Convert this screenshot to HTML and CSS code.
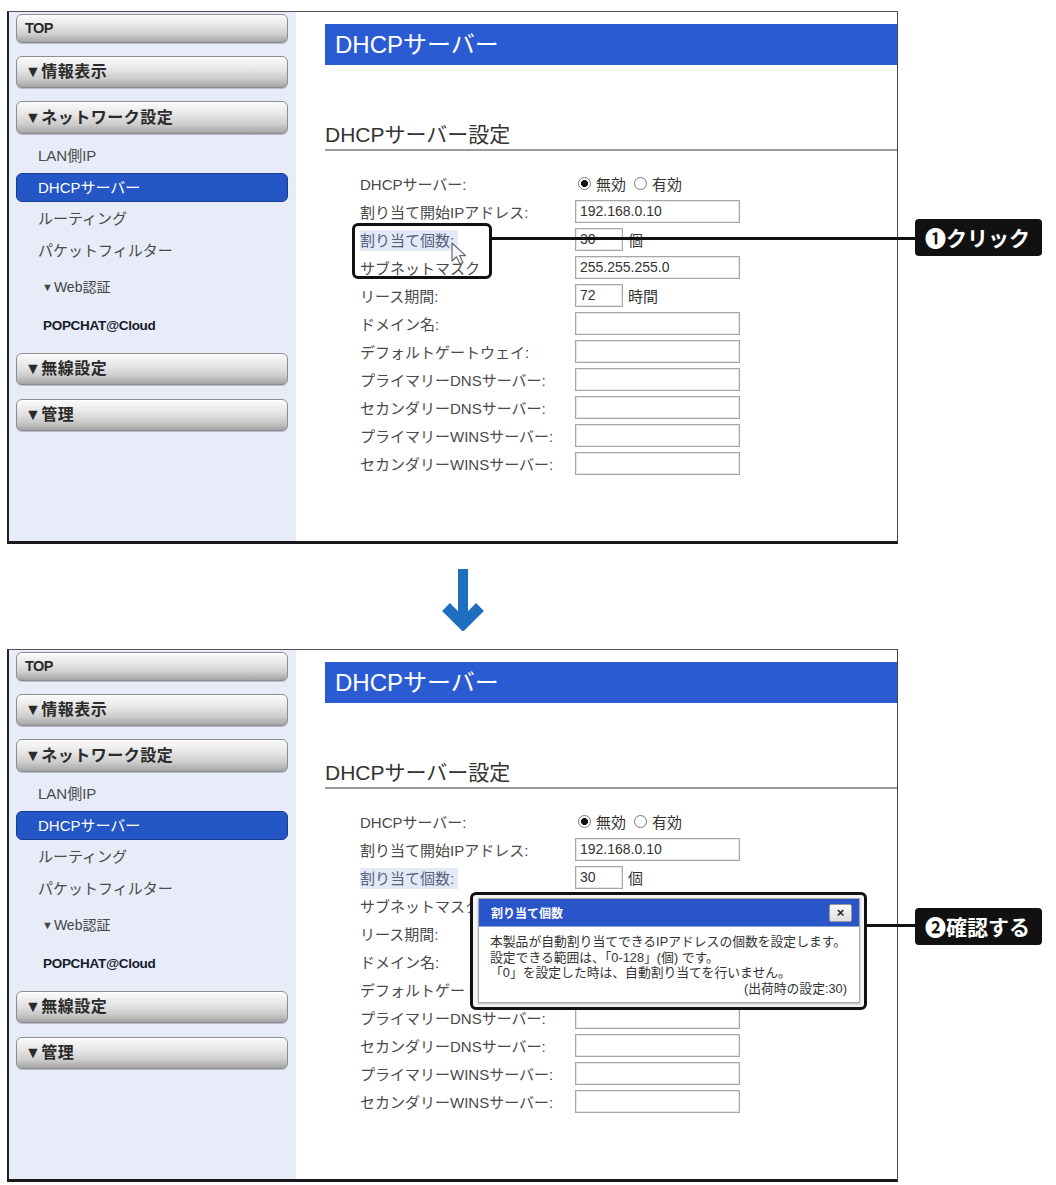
FILE: index.html
```html
<!DOCTYPE html>
<html lang="ja">
<head>
<meta charset="utf-8">
<title>DHCPサーバー</title>
<link rel="stylesheet" href="styles.css">
</head>
<body>
<main class="page">
  <section class="shot">
    <div class="screen">
      <nav class="side">
        <div class="btn btn-top">TOP</div>
        <div class="btn btn-info">▼情報表示</div>
        <div class="btn btn-net">▼ネットワーク設定</div>
        <div class="item i-lan">LAN側IP</div>
        <div class="item sel">DHCPサーバー</div>
        <div class="item i-route">ルーティング</div>
        <div class="item i-pkt">パケットフィルター</div>
        <div class="item i-web"><span class="tri">▼</span>Web認証</div>
        <div class="item i-pop">POPCHAT@Cloud</div>
        <div class="btn btn-wl">▼無線設定</div>
        <div class="btn btn-adm">▼管理</div>
      </nav>
      <div class="content">
        <h1 class="bar">DHCPサーバー</h1>
        <h2 class="sec">DHCPサーバー設定</h2>
        <div class="form">
          <div class="row"><span class="lbl">DHCPサーバー:</span><span class="val"><span class="radio on"></span>無効<span class="radio r2"></span>有効</span></div>
          <div class="row"><span class="lbl">割り当て開始IPアドレス:</span><span class="inp">192.168.0.10</span></div>
          <div class="row"><span class="lbl"><span class="hl">割り当て個数:</span></span><span class="inp small">30</span><span class="unit">個</span></div>
          <div class="row"><span class="lbl">サブネットマスク</span><span class="inp">255.255.255.0</span></div>
          <div class="row"><span class="lbl">リース期間:</span><span class="inp small">72</span><span class="unit">時間</span></div>
          <div class="row"><span class="lbl">ドメイン名:</span><span class="inp"></span></div>
          <div class="row"><span class="lbl">デフォルトゲートウェイ:</span><span class="inp"></span></div>
          <div class="row"><span class="lbl">プライマリーDNSサーバー:</span><span class="inp"></span></div>
          <div class="row"><span class="lbl">セカンダリーDNSサーバー:</span><span class="inp"></span></div>
          <div class="row"><span class="lbl">プライマリーWINSサーバー:</span><span class="inp"></span></div>
          <div class="row"><span class="lbl">セカンダリーWINSサーバー:</span><span class="inp"></span></div>
        </div>
      </div>
    </div>
    <div class="box1"></div>
    <svg class="cursor" width="16" height="24" viewBox="0 0 16 24"><path d="M1 1 L1 19 L5.5 14.8 L9 22 L12 20.6 L8.6 13.6 L14.6 13.6 Z" fill="#f4f6fb" stroke="#6a6a6a" stroke-width="1.2" stroke-linejoin="round"/></svg>
    <div class="line line1"></div>
    <div class="tag tag1">❶クリック</div>
  </section>

  <div class="arrow">
    <svg width="46" height="62" viewBox="0 0 46 62"><rect x="18" y="0" width="10" height="50" fill="#1f6fc1"/><polyline points="6,38 23,55 40,38" fill="none" stroke="#1f6fc1" stroke-width="11" stroke-linejoin="miter"/></svg>
  </div>

  <section class="shot">
    <div class="screen">
      <nav class="side">
        <div class="btn btn-top">TOP</div>
        <div class="btn btn-info">▼情報表示</div>
        <div class="btn btn-net">▼ネットワーク設定</div>
        <div class="item i-lan">LAN側IP</div>
        <div class="item sel">DHCPサーバー</div>
        <div class="item i-route">ルーティング</div>
        <div class="item i-pkt">パケットフィルター</div>
        <div class="item i-web"><span class="tri">▼</span>Web認証</div>
        <div class="item i-pop">POPCHAT@Cloud</div>
        <div class="btn btn-wl">▼無線設定</div>
        <div class="btn btn-adm">▼管理</div>
      </nav>
      <div class="content">
        <h1 class="bar">DHCPサーバー</h1>
        <h2 class="sec">DHCPサーバー設定</h2>
        <div class="form">
          <div class="row"><span class="lbl">DHCPサーバー:</span><span class="val"><span class="radio on"></span>無効<span class="radio r2"></span>有効</span></div>
          <div class="row"><span class="lbl">割り当て開始IPアドレス:</span><span class="inp">192.168.0.10</span></div>
          <div class="row"><span class="lbl"><span class="hl">割り当て個数:</span></span><span class="inp small">30</span><span class="unit">個</span></div>
          <div class="row"><span class="lbl">サブネットマスク:</span><span class="inp"></span></div>
          <div class="row"><span class="lbl">リース期間:</span><span class="inp small"></span></div>
          <div class="row"><span class="lbl">ドメイン名:</span><span class="inp"></span></div>
          <div class="row"><span class="lbl">デフォルトゲートウェイ:</span><span class="inp"></span></div>
          <div class="row"><span class="lbl">プライマリーDNSサーバー:</span><span class="inp"></span></div>
          <div class="row"><span class="lbl">セカンダリーDNSサーバー:</span><span class="inp"></span></div>
          <div class="row"><span class="lbl">プライマリーWINSサーバー:</span><span class="inp"></span></div>
          <div class="row"><span class="lbl">セカンダリーWINSサーバー:</span><span class="inp"></span></div>
        </div>
      </div>
    </div>
    <div class="box2">
      <div class="win">
        <div class="win-title"><span>割り当て個数</span><span class="close">×</span></div>
        <div class="win-body">
          <p>本製品が自動割り当てできるIPアドレスの個数を設定します。</p>
          <p>設定できる範囲は、「0-128」(個) です。</p>
          <p>「0」を設定した時は、自動割り当てを行いません。</p>
          <p class="def">(出荷時の設定:30)</p>
        </div>
      </div>
    </div>
    <div class="line line2"></div>
    <div class="tag tag2">❷確認する</div>
  </section>
</main>
</body>
</html>
```

FILE: styles.css
```css
* { box-sizing: border-box; }
html, body { margin: 0; padding: 0; background: #fff; }
body {
  font-family: "Liberation Sans", "Noto Sans CJK JP", sans-serif;
  color: #333;
  width: 1056px;
  height: 1185px;
  overflow: hidden;
}
.page { padding-top: 11px; }

.shot { position: relative; height: 533px; }

.screen {
  margin-left: 7px;
  width: 891px;
  height: 533px;
  display: flex;
  background: #fff;
  border-left: 2px solid #222;
  border-top: 1px solid #555;
  border-right: 1px solid #444;
  border-bottom: 3px solid #1a1a1a;
}

/* sidebar */
.side {
  width: 287px;
  flex: none;
  background: #e7ecf8;
  padding: 2px 8px 0 7px;
  display: flex;
  flex-direction: column;
}
.btn {
  height: 32px;
  line-height: 30px;
  padding-left: 8px;
  border: 1px solid #8c8c8c;
  border-radius: 6px;
  background: linear-gradient(#fbfbfb 0%, #e6e6e6 40%, #cdcdcd 72%, #a4a4a4 100%);
  box-shadow: inset 0 1px 0 #fff, 0 1px 0 #b8bccb;
  font-size: 16px;
  font-weight: bold;
  color: #2a2a2a;
  letter-spacing: 0.5px;
}
.btn-top { height: 29px; line-height: 27px; font-size: 14.5px; letter-spacing: -0.5px; }
.btn-info { margin-top: 13px; }
.btn-net { margin-top: 13px; height: 33px; line-height: 31px; }
.btn-wl { margin-top: 12px; }
.btn-adm { margin-top: 14px; }

.item {
  height: 30px;
  line-height: 30px;
  padding-left: 22px;
  font-size: 15px;
  color: #4a4a4a;
  margin-top: 2px;
}
.i-lan { margin-top: 7px; }
.sel {
  height: 29px;
  line-height: 27px;
  padding-left: 21px;
  background: #2456c6;
  border: 1px solid #1a3d94;
  border-radius: 6px;
  color: #fff;
}
.i-web { margin-top: 6px; padding-left: 26px; font-size: 14px; color: #444; }
.tri { font-size: 11px; margin-right: 1px; position: relative; top: -1px; }
.i-pop {
  margin-top: 9px;
  padding-left: 27px;
  font-size: 13.5px;
  font-weight: bold;
  color: #161a2a;
  letter-spacing: -0.3px;
}

/* content */
.content { flex: 1; padding-top: 12px; }
.bar {
  margin: 0 0 0 29px;
  height: 41px;
  line-height: 41px;
  padding-left: 10px;
  background: #2b5bd3;
  color: #fff;
  font-size: 24px;
  font-weight: normal;
}
.sec {
  margin: 56px 0 0 29px;
  height: 30px;
  line-height: 28px;
  font-size: 21px;
  font-weight: normal;
  color: #333;
  border-bottom: 2px solid #9a9a9a;
}
.form { margin-top: 18px; padding-left: 64px; }
.row { display: flex; align-items: center; height: 28px; }
.lbl { width: 215px; flex: none; font-size: 15px; color: #4a4a4a; }
.hl { background: #e3e9f7; padding: 2px 4px 2px 0; color: #55607a; }
.val { display: flex; align-items: center; font-size: 15px; color: #333; }
.radio {
  display: inline-block;
  width: 13px;
  height: 13px;
  border: 1px solid #777;
  border-radius: 50%;
  margin: 0 5px 0 3px;
  background: #fff;
}
.radio.on { background: radial-gradient(circle, #111 0 3.2px, #fff 3.8px); }
.radio.r2 { margin-left: 8px; }
.inp {
  width: 165px;
  height: 23px;
  line-height: 21px;
  border: 1px solid #a6a6a6;
  box-shadow: inset 0 0 0 1px #e6e6e6;
  padding-left: 4px;
  font-size: 14px;
  color: #333;
  background: #fff;
}
.inp.small { width: 48px; }
.unit { margin-left: 5px; font-size: 15px; color: #333; }

/* annotations */
.box1 {
  position: absolute;
  left: 352px;
  top: 212px;
  width: 140px;
  height: 56px;
  border: 3px solid #111;
  border-radius: 6px;
}
.cursor { position: absolute; left: 451px; top: 231px; }
.line { position: absolute; height: 3px; background: #111; }
.line1 { left: 492px; top: 226px; width: 424px; }
.line2 { left: 866px; top: 275px; width: 50px; }
.tag {
  position: absolute;
  left: 915px;
  height: 37px;
  line-height: 37px;
  padding: 0 12px 0 10px;
  background: #111;
  color: #fff;
  border-radius: 4px;
  font-family: "Noto Sans CJK JP", "DejaVu Sans", sans-serif;
  font-size: 21px;
  font-weight: bold;
  white-space: nowrap;
}
.tag1 { top: 208px; }
.tag2 { top: 259px; }

.box2 {
  position: absolute;
  left: 470px;
  top: 243px;
  width: 397px;
  height: 118px;
  border: 3px solid #111;
  border-radius: 6px;
  background: #f4f4f4;
  padding: 3px 4px 4px 5px;
}
.win {
  height: 100%;
  background: #fff;
  border: 1px solid #a8a8a8;
  box-shadow: 0 1px 2px rgba(0,0,0,0.25);
}
.win-title {
  height: 28px;
  background: #2a55c8;
  border-bottom: 1px solid #8ea0d0;
  display: flex;
  align-items: center;
  justify-content: space-between;
  padding: 0 7px 0 12px;
  color: #fff;
  font-size: 12px;
  font-weight: bold;
}
.close {
  width: 23px;
  height: 18px;
  line-height: 16px;
  text-align: center;
  background: linear-gradient(#fafafa, #dedede);
  border: 1px solid #9a9a9a;
  border-radius: 2px;
  color: #222;
  font-size: 13px;
}
.win-body { padding: 7px 12px 0 11px; font-size: 12.8px; line-height: 15.5px; color: #333; }
.win-body p { margin: 0; white-space: nowrap; }
.win-body .def { text-align: right; }

.arrow { height: 105px; padding: 25px 0 0 440px; }
.arrow svg { display: block; }
```
